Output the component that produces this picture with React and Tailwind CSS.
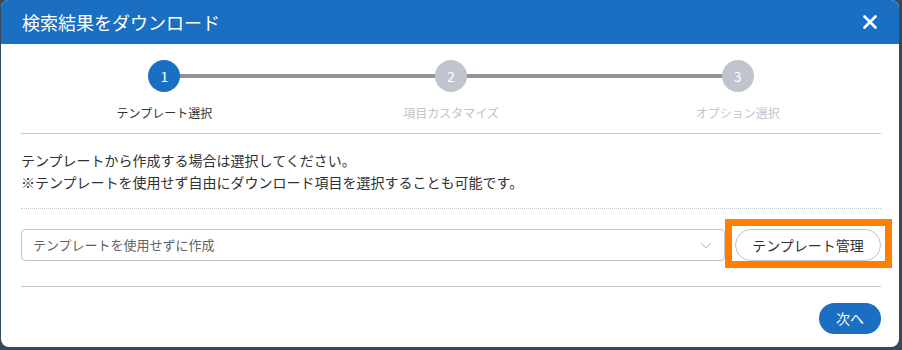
import React from 'react';

const steps = [
  { no: 1, label: 'テンプレート選択', active: true },
  { no: 2, label: '項目カスタマイズ', active: false },
  { no: 3, label: 'オプション選択', active: false },
];

function Stepper() {
  return (
    <div className="grid grid-cols-3 pt-[16px] pb-[12px] border-b border-[#c8c9cc]">
      {steps.map((s, i) => (
        <div key={s.no} className="flex flex-col items-center">
          <div className="relative w-full flex justify-center">
            {/* connector line to the next step */}
            {i < steps.length - 1 && (
              <div className="absolute left-1/2 w-full top-[14px] h-[4px] bg-[#909399]" />
            )}
            <div
              className={
                s.active
                  ? 'relative z-10 w-[32px] h-[32px] rounded-full bg-[#1b6fc2] text-white text-[14px] flex items-center justify-center'
                  : 'relative z-10 w-[32px] h-[32px] rounded-full bg-[#c0c4cc] text-white text-[14px] flex items-center justify-center'
              }
            >
              {s.no}
            </div>
          </div>
          <div
            className={
              s.active
                ? 'mt-[13px] text-[12px] leading-[16px] text-[#303133]'
                : 'mt-[13px] text-[12px] leading-[16px] text-[#c0c4cc]'
            }
          >
            {s.label}
          </div>
        </div>
      ))}
    </div>
  );
}

export default function App() {
  return (
    <div
      className="w-[902px] h-[350px] bg-[#34495a] pl-[1px] overflow-hidden"
      style={{ fontFamily: '"Noto Sans CJK JP", "Noto Sans", sans-serif' }}
    >
      <div className="w-[898px] h-[347px] bg-white rounded-[8px] overflow-hidden flex flex-col">
        {/* Header */}
        <div className="h-[44px] bg-[#1b6fc2] flex items-center justify-between pl-[21px] pr-[22px] shrink-0">
          <h2 className="text-white text-[18px] leading-none">検索結果をダウンロード</h2>
          <button className="text-white">
            <svg width="14" height="14" viewBox="0 0 14 14">
              <path d="M1.5 1.5 L12.5 12.5 M12.5 1.5 L1.5 12.5" stroke="currentColor" strokeWidth="2.6" strokeLinecap="round" />
            </svg>
          </button>
        </div>

        {/* Body */}
        <div className="pl-[20px] pr-[18px] flex-1 flex flex-col">
          <Stepper />

          <div className="pt-[15px] pb-[15px] border-b border-dotted border-[#c0c4cc] text-[14px] leading-[22px] text-[#303133]">
            <p>テンプレートから作成する場合は選択してください。</p>
            <p>※テンプレートを使用せず自由にダウンロード項目を選択することも可能です。</p>
          </div>

          <div className="flex items-center pt-[20px] pb-[25px] border-b border-[#c8c9cc]">
            <div className="flex-1 h-[32px] border border-[#c0c4cc] rounded-[4px] flex items-center justify-between pl-[11px] pr-[12px]">
              <span className="text-[13px] text-[#606266]">テンプレートを使用せずに作成</span>
              <svg width="12" height="7" viewBox="0 0 12 7">
                <path d="M1 1 L6 6 L11 1" fill="none" stroke="#b0b3b8" strokeWidth="1" />
              </svg>
            </div>
            <div className="relative ml-[10px]">
              <button className="relative z-10 w-[146px] h-[32px] rounded-full border border-[#c0c4cc] bg-white text-[14px] text-[#303133]">
                テンプレート管理
              </button>
              {/* highlight frame */}
              <div className="absolute -left-[10px] -right-[11px] -top-[10px] -bottom-[7px] border-[7px] border-[#ff8000] pointer-events-none" />
            </div>
          </div>

          <div className="flex justify-end pt-[16px]">
            <button className="w-[62px] h-[31px] rounded-full bg-[#1b6fc2] text-white text-[14px]">次へ</button>
          </div>
        </div>
      </div>
    </div>
  );
}
